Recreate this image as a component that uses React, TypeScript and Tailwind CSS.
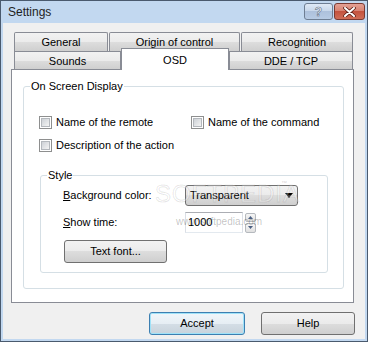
import React from 'react';

const btnBg =
  'bg-[linear-gradient(to_bottom,#f2f2f2_0%,#ebebeb_50%,#dddddd_50%,#cfcfcf_100%)]';

const Check: React.FC<{ label: string }> = ({ label }) => (
  <div className="flex items-center gap-[4px] h-[13px]">
    <span className="w-[13px] h-[13px] border border-[#8e8f8f] bg-white flex items-center justify-center">
      <span className="w-[9px] h-[9px] border border-[#b4b8bd] bg-[linear-gradient(135deg,#cdd1d6,#f4f4f4)]" />
    </span>
    <span className="leading-[13px]">{label}</span>
  </div>
);

const Group: React.FC<{ title: string; className: string; children?: React.ReactNode }> = ({ title, className, children }) => (
  <div className={`relative border border-[#d5dfe5] rounded-[3px] ${className}`}>
    <span className="absolute left-[6px] -top-[7px] px-[1px] bg-white leading-[13px]">{title}</span>
    {children}
  </div>
);

const Tab: React.FC<{ label: string; w: string }> = ({ label, w }) => (
  <div className={`${w} h-full border border-[#898c95] border-b-0 rounded-t-[2px] ${btnBg} flex items-center justify-center`}>
    {label}
  </div>
);

const App: React.FC = () => {
  return (
    <div className="relative w-[368px] h-[342px] bg-[#c2d8f0] border border-[#4a5a6e] flex flex-col text-[11px] text-black font-['Liberation_Sans',Arial,sans-serif] overflow-hidden select-none">
      {/* Title bar */}
      <div className="h-[22px] flex items-start pl-[7px] pr-[2px]">
        <span className="text-[12px] leading-[22px] text-[#1e1e1e]">Settings</span>
        <div className="ml-auto mt-[2px] flex gap-[1px]">
          <div className="w-[29px] h-[17px] rounded-[3px] border border-[#6e7e93] bg-[linear-gradient(to_bottom,#dfe9f5_0%,#c6d6ea_50%,#adc1dc_50%,#b7cbe4_100%)] flex items-center justify-center">
            <span className="text-[12px] font-bold leading-none text-white [-webkit-text-stroke:0.6px_#5a6d86]">?</span>
          </div>
          <div className="w-[31px] h-[17px] rounded-[3px] border border-[#7a3a32] bg-[linear-gradient(to_bottom,#e4a195_0%,#d7806f_50%,#c4533f_50%,#cf6d57_100%)] flex items-center justify-center">
            <svg width="13" height="10" viewBox="0 0 13 10">
              <path d="M2 1 L11 9 M11 1 L2 9" stroke="#5b1f16" strokeWidth="3.6" strokeLinecap="round" />
              <path d="M2 1 L11 9 M11 1 L2 9" stroke="#ffffff" strokeWidth="2" strokeLinecap="round" />
            </svg>
          </div>
        </div>
      </div>

      {/* Client area */}
      <div className="flex-1 mx-[2px] mb-[2px] bg-[#f0f0f0] flex flex-col">
        <div className="mt-[9px] ml-[8px] w-[343px] flex flex-col">
          <div className="h-[19px] flex gap-[1px] pl-[3px]">
            <Tab label="General" w="w-[94px]" />
            <Tab label="Origin of control" w="w-[131px]" />
            <Tab label="Recognition" w="w-[112px]" />
          </div>
          <div className="h-[18px] flex items-end pl-[3px]">
            <div className="w-[107px] h-[18px] border border-[#898c95] border-b-0 bg-[linear-gradient(to_bottom,#f2f2f2_0%,#ebebeb_50%,#dddddd_50%,#cfcfcf_100%)] flex items-center justify-center pt-[1px]">
              Sounds
            </div>
            <div className="relative z-10 w-[108px] h-[22px] -mb-[1px] border border-[#898c95] border-b-0 bg-white flex justify-center pt-[3px]">
              OSD
            </div>
            <div className="w-[124px] h-[18px] border border-[#898c95] border-b-0 bg-[linear-gradient(to_bottom,#f2f2f2_0%,#ebebeb_50%,#dddddd_50%,#cfcfcf_100%)] flex items-center justify-center pt-[1px]">
              DDE / TCP
            </div>
          </div>

          <div className="h-[234px] border border-[#898c95] bg-white flex flex-col">
            <Group title="On Screen Display" className="mt-[16px] ml-[11px] mr-[9px] h-[203px] flex flex-col">
              <div className="pt-[29px] pl-[15px] grid grid-cols-[152px_auto] gap-y-[10px]">
                <Check label="Name of the remote" />
                <Check label="Name of the command" />
                <Check label="Description of the action" />
              </div>

              <Group title="Style" className="mt-[23px] ml-[16px] mr-[15px] h-[98px] flex flex-col">
                <div className="mt-[9px] h-[21px] flex items-center">
                  <span className="w-[144px] pl-[22px]">
                    <span className="underline">B</span>ackground color:
                  </span>
                  <div className={`w-[113px] h-[21px] rounded-[3px] border border-[#707070] ${btnBg} flex items-center pl-[4px] pr-[4px]`}>
                    <span>Transparent</span>
                    <svg className="ml-auto" width="8" height="5" viewBox="0 0 8 5">
                      <path d="M0 0 H8 L4 5 Z" fill="#000" />
                    </svg>
                  </div>
                </div>
                <div className="mt-[6px] h-[21px] flex items-center">
                  <span className="w-[144px] pl-[22px]">
                    <span className="underline">S</span>how time:
                  </span>
                  <div className="w-[58px] h-[21px] border border-[#abadb3] border-b-[#e3e9ef] border-x-[#dbdfe6] bg-white flex items-center pl-[2px]">
                    1000
                  </div>
                  <div className="ml-[2px] w-[11px] h-[20px] flex flex-col gap-[1px]">
                    <div className="flex-1 border border-[#b5b9be] rounded-[2px] bg-[linear-gradient(to_bottom,#f6f6f6,#e0e0e0)] flex items-center justify-center">
                      <svg width="5" height="3" viewBox="0 0 5 3"><path d="M0 3 L2.5 0 L5 3 Z" fill="#4a5f82" /></svg>
                    </div>
                    <div className="flex-1 border border-[#b5b9be] rounded-[2px] bg-[linear-gradient(to_bottom,#f6f6f6,#e0e0e0)] flex items-center justify-center">
                      <svg width="5" height="3" viewBox="0 0 5 3"><path d="M0 0 H5 L2.5 3 Z" fill="#4a5f82" /></svg>
                    </div>
                  </div>
                </div>
                <div className={`mt-[7px] ml-[23px] w-[103px] h-[23px] rounded-[3px] border border-[#707070] ${btnBg} flex items-center justify-center`}>
                  Text font...
                </div>
              </Group>
            </Group>
          </div>
        </div>

        <div className="mt-[9px] pr-[10px] flex justify-end gap-[16px]">
          <div className="w-[96px] h-[23px] rounded-[3px] border border-[#3c7fb1] shadow-[inset_0_0_0_1px_#9fe2f8] bg-[linear-gradient(to_bottom,#f0f6fa_0%,#e6eef4_50%,#d4dee6_50%,#c8d3dc_100%)] flex items-center justify-center">
            Accept
          </div>
          <div className={`w-[94px] h-[23px] rounded-[3px] border border-[#707070] ${btnBg} flex items-center justify-center`}>
            Help
          </div>
        </div>
      </div>

      {/* watermark */}
      <div className="pointer-events-none absolute left-[154px] top-[180px] text-[24px] leading-[26px] tracking-[1px] text-white/30 [-webkit-text-stroke:1px_rgba(0,0,0,0.1)]">
        SOFTPEDIA
      </div>
      <div className="pointer-events-none absolute left-[280px] top-[178px] text-[6px] text-black/20">™</div>
      <div className="pointer-events-none absolute left-[175px] top-[215px] text-[10px] leading-[12px] text-black/25">
        www.softpedia.com
      </div>
    </div>
  );
};

export default App;
